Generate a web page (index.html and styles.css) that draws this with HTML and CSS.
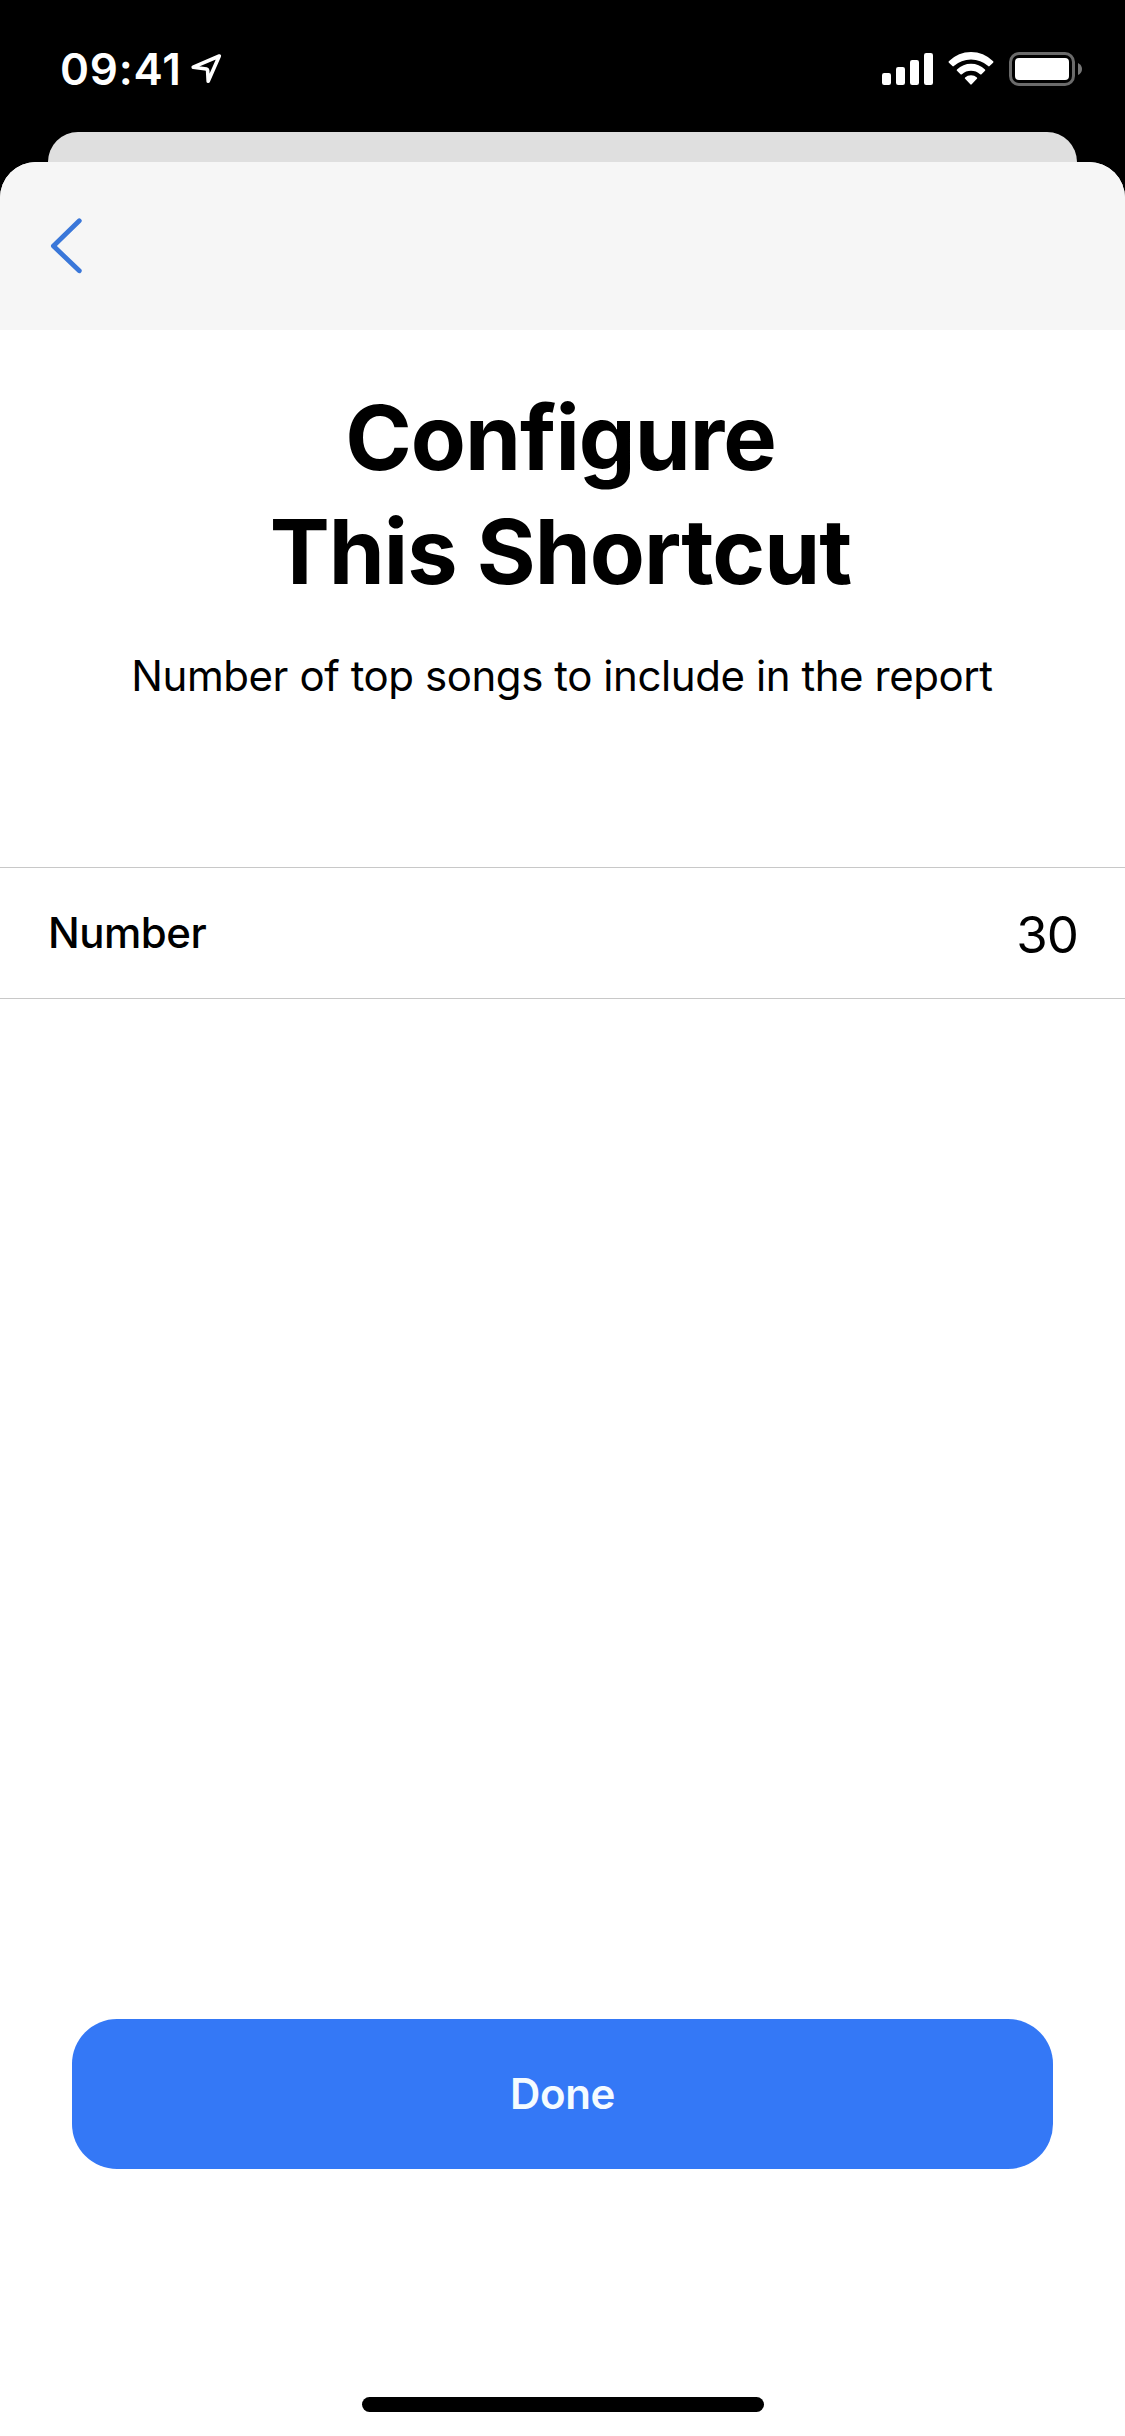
FILE: index.html
```html
<!DOCTYPE html>
<html lang="en">
<head>
<meta charset="utf-8">
<title>Configure This Shortcut</title>
<link rel="stylesheet" href="styles.css">
</head>
<body>
<div class="screen">
  <header class="status">
    <div class="status-left">
      <span class="time">09:41</span>
      <svg class="location" width="32" height="32" viewBox="190 53 32 32"><path d="M219.3 56 L193.2 67.2 L206.5 69 Q207.5 69.2 207.6 70.2 L208.2 81.3 Z"/></svg>
    </div>
    <svg class="indicators" width="202" height="36" viewBox="881 51 202 36">
      <g fill="#fff">
        <rect x="882" y="73" width="9" height="12" rx="2.2"/>
        <rect x="896" y="67" width="9" height="18" rx="2.2"/>
        <rect x="910" y="60" width="9" height="25" rx="2.2"/>
        <rect x="924" y="53" width="9" height="32" rx="2.2"/>
        <path d="M948.8 61.2 Q958.5 52 971 52 T993.2 61.2 Q993.8 62 993.1 62.7 L989.6 66.1 Q988.9 66.7 988.2 66.1 Q980.8 59.5 971 59.5 T953.8 66.1 Q953.1 66.7 952.4 66.1 L948.9 62.7 Q948.2 62 948.8 61.2 Z"/>
        <path d="M957 69.4 Q963 63.7 971 63.7 T985 69.4 Q985.7 70.1 985 70.8 L981.5 74.2 Q980.8 74.8 980.1 74.2 Q976.2 70.8 971 70.8 T961.9 74.2 Q961.2 74.8 960.5 74.2 L957 70.8 Q956.3 70.1 957 69.4 Z"/>
        <path d="M965.1 77.4 Q967.5 75.2 971 75.2 T976.9 77.4 Q977.6 78.1 976.9 78.8 L971.7 84.3 Q971 85 970.3 84.3 L965.1 78.8 Q964.4 78.1 965.1 77.4 Z"/>
        <rect x="1015" y="58" width="54" height="22" rx="4"/>
      </g>
      <rect x="1010.5" y="53.5" width="63" height="31" rx="8.5" fill="none" stroke="#6b6b6b" stroke-width="3"/>
      <path d="M1078 63 Q1082 65 1082 69 T1078 75 Z" fill="#777"/>
    </svg>
  </header>
  <div class="back-sheet"></div>
  <main class="sheet">
    <nav class="nav">
      <svg width="34" height="58" viewBox="50 217 34 58"><path d="M79.3 220.8 L53.4 246 L79.3 270.8"/></svg>
    </nav>
    <h1 class="title">Configure<br>This Shortcut</h1>
    <p class="subtitle">Number of top songs to include in the report</p>
    <div class="row">
      <span class="label">Number</span>
      <span class="value">30</span>
    </div>
    <button class="done">Done</button>
    <div class="home"></div>
  </main>
</div>
</body>
</html>
```
FILE: styles.css
```css
* { box-sizing: border-box; }
body {
  margin: 0;
  background: #000;
  font-family: Inter, "Liberation Sans", sans-serif;
  color: #000;
}
.screen {
  width: 1125px;
  height: 2436px;
  display: flex;
  flex-direction: column;
  overflow: hidden;
  background: #000;
}
.status {
  height: 132px;
  flex: none;
  display: flex;
  justify-content: space-between;
  align-items: flex-start;
  padding: 44px 42px 0 60px;
  color: #fff;
}
.status-left { display: flex; align-items: flex-start; }
.time {
  width: 130px;
  font-size: 44px;
  line-height: 50px;
  font-weight: 600;
  letter-spacing: 0.8px;
}
.location {
  margin-top: 9px;
  fill: none;
  stroke: #fff;
  stroke-width: 3.6;
  stroke-linejoin: round;
}
.indicators { margin-top: 7px; }
.back-sheet {
  flex: none;
  height: 30px;
  margin: 0 48px;
  border-radius: 30px 30px 0 0;
  background: #dfdfdf;
}
.sheet {
  flex: 1;
  display: flex;
  flex-direction: column;
  border-radius: 36px 36px 0 0;
  background: #fff;
  overflow: hidden;
}
.nav {
  flex: none;
  height: 168px;
  padding: 55px 50px 0;
  background: #f6f6f6;
}
.nav svg {
  display: block;
  fill: none;
  stroke: #3a77d9;
  stroke-width: 4.8;
  stroke-linecap: round;
  stroke-linejoin: round;
}
.title {
  margin: 51px 0 0;
  padding-right: 4px;
  text-align: center;
  font-size: 90px;
  line-height: 114px;
  font-weight: 700;
  letter-spacing: -1.03px;
}
.subtitle {
  margin: 42px 0 0;
  padding-right: 1px;
  text-align: center;
  font-size: 42px;
  line-height: 50px;
  letter-spacing: -0.43px;
}
.row {
  flex: none;
  height: 132px;
  margin-top: 166px;
  padding: 0 47px 0 48px;
  display: flex;
  justify-content: space-between;
  align-items: center;
  border-top: 1px solid #c8c8c8;
  border-bottom: 1px solid #c8c8c8;
}
.label {
  padding-bottom: 2px;
  font-size: 42px;
  font-weight: 500;
  letter-spacing: -0.5px;
}
.value {
  padding-top: 3px;
  font-size: 51px;
  letter-spacing: -1px;
}
.done {
  flex: none;
  height: 150px;
  margin: 1020px 72px 0;
  padding: 0;
  border: 0;
  border-radius: 45px;
  background: #3478f6;
  color: #f4fbff;
  font: 600 42px/50px Inter, "Liberation Sans", sans-serif;
  letter-spacing: -0.4px;
}
.home {
  width: 402px;
  height: 15px;
  margin: auto auto 24px;
  border-radius: 8px;
  background: #000;
}
```
